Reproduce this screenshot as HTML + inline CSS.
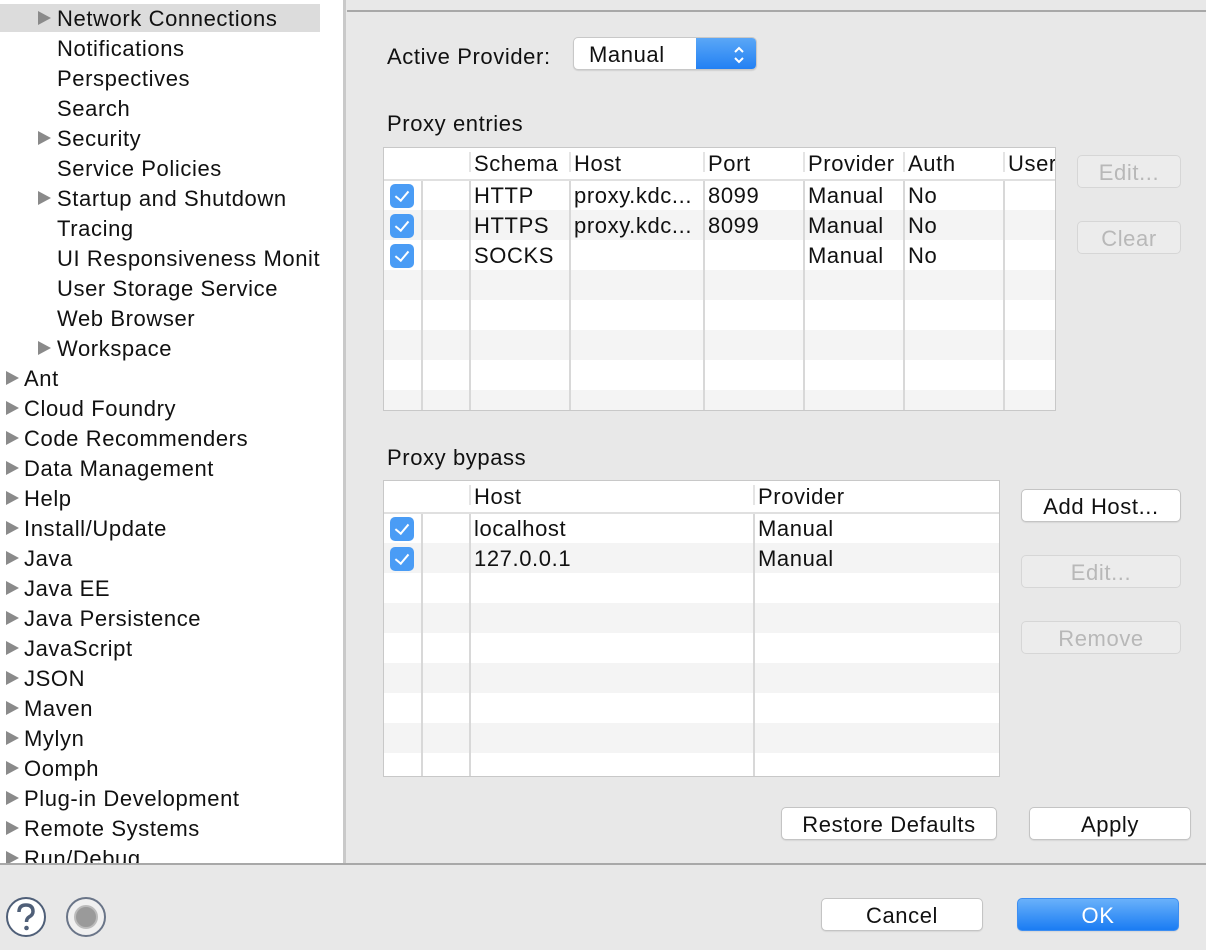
<!DOCTYPE html>
<html><head><meta charset="utf-8"><style>
*{margin:0;padding:0;box-sizing:border-box}
body{width:1206px;height:950px;background:#e8e8e8;font-family:"Liberation Sans",sans-serif;font-size:22px;letter-spacing:0.6px;color:#111;position:relative;overflow:hidden}
.a{position:absolute}
#side{left:0;top:0;width:346px;height:864px;background:#fff;border-right:3px solid #c9c9c9;overflow:hidden}
.it{position:absolute;height:30px;line-height:32px;white-space:nowrap}
.tri{position:absolute;width:0;height:0;border-left:13px solid #8a8a8a;border-top:7px solid transparent;border-bottom:7px solid transparent;top:8px}
.tbl{position:absolute;background:#fff;border:1px solid #c8c8c8;overflow:hidden}
.row{position:absolute;left:0;right:0;height:30px}
.g{background:#f4f4f4}
.vl{position:absolute;width:2px;background:#d8d8d8}
.hs{position:absolute;width:2px;background:#e4e4e4;height:20px;top:4px}
.tx{position:absolute;white-space:nowrap;line-height:32px}
.cb{position:absolute;width:24px;height:24px;border-radius:5px;background:#4a9cf5}
.cb:after{content:"";position:absolute;left:8px;top:4px;width:6px;height:11px;border:solid #fff;border-width:0 2px 2px 0;transform:rotate(40deg)}
.btn{position:absolute;height:33px;background:#fff;border:1px solid #c4c4c4;border-radius:5px;text-align:center;line-height:33px;box-shadow:0 1px 1px rgba(0,0,0,.08)}
.dis{background:#ececec;color:#b8b8b8;border-color:#d6d6d6;box-shadow:none}
</style></head><body>
<div id="side" class="a">
<div class="a" style="left:0;top:4px;width:320px;height:28px;background:#dcdcdc"></div>
<div class="it" style="top:3px;left:57px">Network Connections</div><div class="tri" style="left:38px;top:11px"></div>
<div class="it" style="top:33px;left:57px">Notifications</div>
<div class="it" style="top:63px;left:57px">Perspectives</div>
<div class="it" style="top:93px;left:57px">Search</div>
<div class="it" style="top:123px;left:57px">Security</div><div class="tri" style="left:38px;top:131px"></div>
<div class="it" style="top:153px;left:57px">Service Policies</div>
<div class="it" style="top:183px;left:57px">Startup and Shutdown</div><div class="tri" style="left:38px;top:191px"></div>
<div class="it" style="top:213px;left:57px">Tracing</div>
<div class="it" style="top:243px;left:57px;width:263px;overflow:hidden">UI Responsiveness Monitoring</div>
<div class="it" style="top:273px;left:57px">User Storage Service</div>
<div class="it" style="top:303px;left:57px">Web Browser</div>
<div class="it" style="top:333px;left:57px">Workspace</div><div class="tri" style="left:38px;top:341px"></div>
<div class="it" style="top:363px;left:24px">Ant</div><div class="tri" style="left:6px;top:371px"></div>
<div class="it" style="top:393px;left:24px">Cloud Foundry</div><div class="tri" style="left:6px;top:401px"></div>
<div class="it" style="top:423px;left:24px">Code Recommenders</div><div class="tri" style="left:6px;top:431px"></div>
<div class="it" style="top:453px;left:24px">Data Management</div><div class="tri" style="left:6px;top:461px"></div>
<div class="it" style="top:483px;left:24px">Help</div><div class="tri" style="left:6px;top:491px"></div>
<div class="it" style="top:513px;left:24px">Install/Update</div><div class="tri" style="left:6px;top:521px"></div>
<div class="it" style="top:543px;left:24px">Java</div><div class="tri" style="left:6px;top:551px"></div>
<div class="it" style="top:573px;left:24px">Java EE</div><div class="tri" style="left:6px;top:581px"></div>
<div class="it" style="top:603px;left:24px">Java Persistence</div><div class="tri" style="left:6px;top:611px"></div>
<div class="it" style="top:633px;left:24px">JavaScript</div><div class="tri" style="left:6px;top:641px"></div>
<div class="it" style="top:663px;left:24px">JSON</div><div class="tri" style="left:6px;top:671px"></div>
<div class="it" style="top:693px;left:24px">Maven</div><div class="tri" style="left:6px;top:701px"></div>
<div class="it" style="top:723px;left:24px">Mylyn</div><div class="tri" style="left:6px;top:731px"></div>
<div class="it" style="top:753px;left:24px">Oomph</div><div class="tri" style="left:6px;top:761px"></div>
<div class="it" style="top:783px;left:24px">Plug-in Development</div><div class="tri" style="left:6px;top:791px"></div>
<div class="it" style="top:813px;left:24px">Remote Systems</div><div class="tri" style="left:6px;top:821px"></div>
<div class="it" style="top:843px;left:24px">Run/Debug</div><div class="tri" style="left:6px;top:851px"></div>
</div>
<div class="a" style="left:347px;top:10px;width:859px;height:2px;background:#a8a8a8"></div>
<div class="a" style="left:0;top:863px;width:1206px;height:2px;background:#a8a8a8"></div>

<div class="a" style="left:387px;top:43px;line-height:28px">Active Provider:</div>
<div class="a" style="left:573px;top:37px;width:184px;height:33px;background:#fff;border:1px solid #c8c8c8;border-radius:5px;overflow:hidden;box-shadow:0 1px 1px rgba(0,0,0,.1)">
<div class="a" style="left:15px;top:3px;line-height:28px">Manual</div>
<div class="a" style="left:122px;top:0;width:62px;height:33px;background:linear-gradient(#5aa7f7,#1f7ef3)"></div>
<svg class="a" style="left:158px;top:6px" width="14" height="22" viewBox="0 0 14 22"><path d="M3 8 L7 4 L11 8 M3 14 L7 18 L11 14" stroke="#fff" stroke-width="2" fill="none"/></svg>
</div>

<div class="a" style="left:387px;top:110px;line-height:28px">Proxy entries</div>
<div class="tbl" style="left:383px;top:147px;width:673px;height:264px">
<div class="row g" style="top:62px"></div><div class="row g" style="top:122px"></div><div class="row g" style="top:182px"></div><div class="row g" style="top:242px"></div>
<div class="a" style="left:0;right:0;top:31px;height:2px;background:#e0e0e0"></div>
<div class="hs" style="left:85px"></div><div class="hs" style="left:185px"></div><div class="hs" style="left:319px"></div><div class="hs" style="left:419px"></div><div class="hs" style="left:519px"></div><div class="hs" style="left:619px"></div>
<div class="vl" style="left:37px;top:33px;bottom:0"></div><div class="vl" style="left:85px;top:33px;bottom:0"></div><div class="vl" style="left:185px;top:33px;bottom:0"></div><div class="vl" style="left:319px;top:33px;bottom:0"></div><div class="vl" style="left:419px;top:33px;bottom:0"></div><div class="vl" style="left:519px;top:33px;bottom:0"></div><div class="vl" style="left:619px;top:33px;bottom:0"></div>
<div class="tx" style="left:90px;top:0">Schema</div><div class="tx" style="left:190px;top:0">Host</div><div class="tx" style="left:324px;top:0">Port</div><div class="tx" style="left:424px;top:0">Provider</div><div class="tx" style="left:524px;top:0">Auth</div><div class="tx" style="left:624px;top:0">User</div>
<div class="cb" style="left:6px;top:36px"></div><div class="cb" style="left:6px;top:66px"></div><div class="cb" style="left:6px;top:96px"></div>
<div class="tx" style="left:90px;top:32px">HTTP</div><div class="tx" style="left:190px;top:32px;width:128px;overflow:hidden">proxy.kdc...</div><div class="tx" style="left:324px;top:32px">8099</div><div class="tx" style="left:424px;top:32px">Manual</div><div class="tx" style="left:524px;top:32px">No</div>
<div class="tx" style="left:90px;top:62px">HTTPS</div><div class="tx" style="left:190px;top:62px;width:128px;overflow:hidden">proxy.kdc...</div><div class="tx" style="left:324px;top:62px">8099</div><div class="tx" style="left:424px;top:62px">Manual</div><div class="tx" style="left:524px;top:62px">No</div>
<div class="tx" style="left:90px;top:92px">SOCKS</div><div class="tx" style="left:424px;top:92px">Manual</div><div class="tx" style="left:524px;top:92px">No</div>
</div>
<div class="btn dis" style="left:1077px;top:155px;width:104px">Edit...</div>
<div class="btn dis" style="left:1077px;top:221px;width:104px">Clear</div>

<div class="a" style="left:387px;top:444px;line-height:28px">Proxy bypass</div>
<div class="tbl" style="left:383px;top:480px;width:617px;height:297px">
<div class="row g" style="top:62px"></div><div class="row g" style="top:122px"></div><div class="row g" style="top:182px"></div><div class="row g" style="top:242px"></div>
<div class="a" style="left:0;right:0;top:31px;height:2px;background:#e0e0e0"></div>
<div class="hs" style="left:85px"></div><div class="hs" style="left:369px"></div>
<div class="vl" style="left:37px;top:33px;bottom:0"></div><div class="vl" style="left:85px;top:33px;bottom:0"></div><div class="vl" style="left:369px;top:33px;bottom:0"></div>
<div class="tx" style="left:90px;top:0">Host</div><div class="tx" style="left:374px;top:0">Provider</div>
<div class="cb" style="left:6px;top:36px"></div><div class="cb" style="left:6px;top:66px"></div>
<div class="tx" style="left:90px;top:32px">localhost</div><div class="tx" style="left:374px;top:32px">Manual</div>
<div class="tx" style="left:90px;top:62px">127.0.0.1</div><div class="tx" style="left:374px;top:62px">Manual</div>
</div>
<div class="btn" style="left:1021px;top:489px;width:160px">Add Host...</div>
<div class="btn dis" style="left:1021px;top:555px;width:160px">Edit...</div>
<div class="btn dis" style="left:1021px;top:621px;width:160px">Remove</div>

<div class="btn" style="left:781px;top:807px;width:216px">Restore Defaults</div>
<div class="btn" style="left:1029px;top:807px;width:162px">Apply</div>
<div class="btn" style="left:821px;top:898px;width:162px">Cancel</div>
<div class="btn" style="left:1017px;top:898px;width:162px;background:linear-gradient(#69b1fa,#1a7cf3);border-color:#3d8ef2;color:#fff">OK</div>

<svg class="a" style="left:4px;top:895px" width="44" height="44" viewBox="0 0 44 44"><circle cx="22" cy="22" r="19" fill="#fff" stroke="#4f5f78" stroke-width="2"/><path d="M15 17 Q15 10 22 10 Q29 10 29 16.5 Q29 20 25 22 Q22.5 23.5 22.5 27" stroke="#4f5f78" stroke-width="3.5" fill="none"/><circle cx="22.5" cy="33" r="2.3" fill="#4f5f78"/></svg>
<svg class="a" style="left:64px;top:895px" width="44" height="44" viewBox="0 0 44 44"><circle cx="22" cy="22" r="19" fill="#f0f0f0" stroke="#6a7588" stroke-width="2"/><circle cx="22" cy="22" r="11" fill="#9a9a9a" stroke="#bbb" stroke-width="2"/></svg>
</body></html>
